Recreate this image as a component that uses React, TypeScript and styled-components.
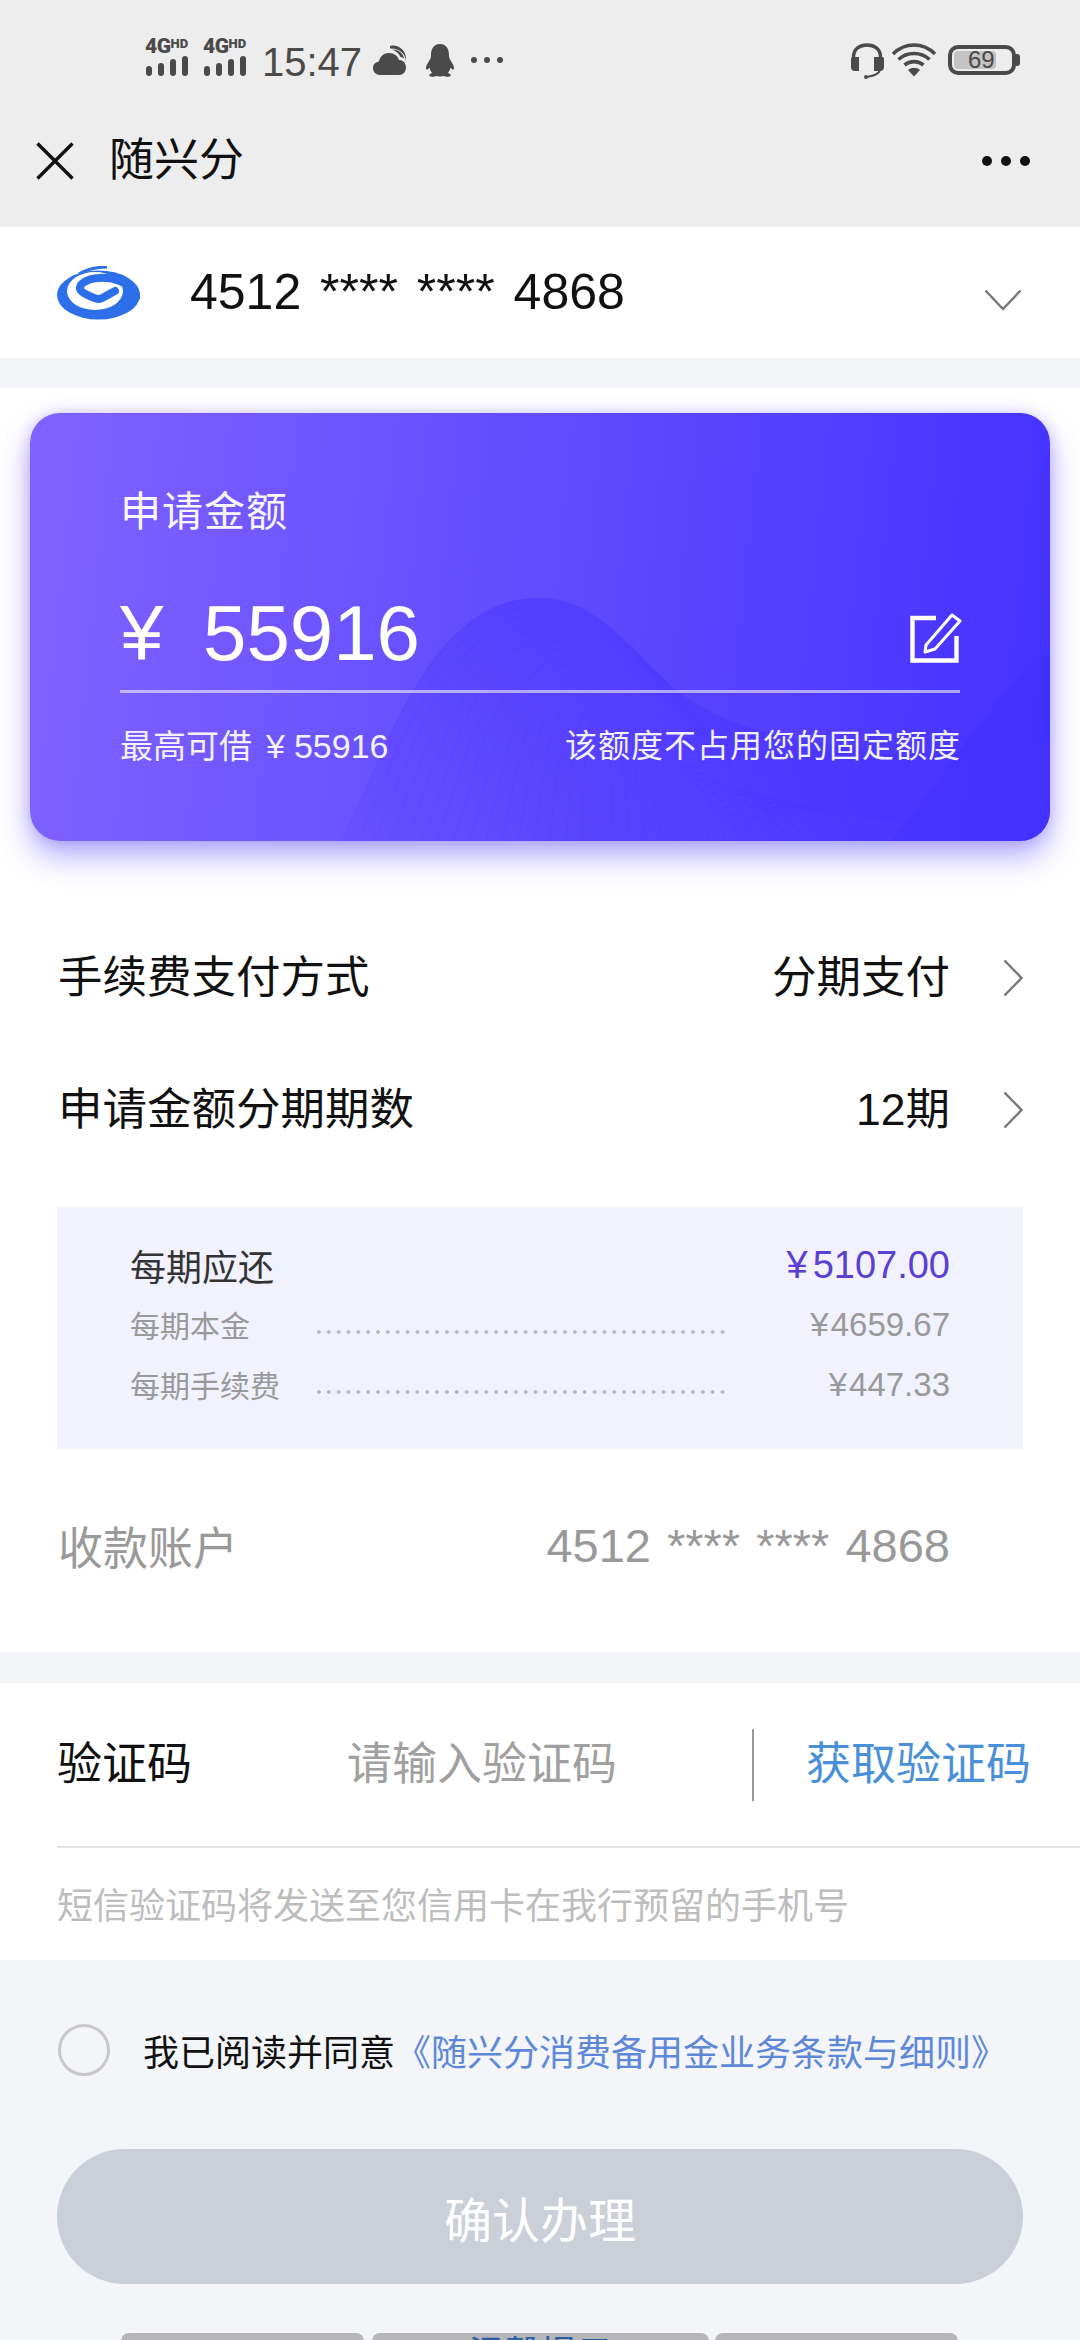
import React from "react";
import styled, { createGlobalStyle } from "styled-components";

const Global = createGlobalStyle`
  html, body { margin: 0; padding: 0; background: #f3f5f9; }
  body { font-family: "Liberation Sans", "Noto Sans CJK SC", sans-serif; color: #111; }
  * { box-sizing: border-box; }
`;

const Page = styled.div`
  width: 1080px;
  height: 2340px;
  overflow: hidden;
  background: #f3f5f9;
`;

const TopBar = styled.header`
  height: 227px;
  background: #ededed;
`;

const StatusBar = styled.div`
  height: 118px;
  padding: 25px 60px 0 145px;
  display: flex;
  align-items: flex-start;
  color: #4a4a4a;
`;

const SignalWrap = styled.div`
  width: 46px;
  margin-right: 12px;
  margin-top: 13px;
  display: flex;
  flex-direction: column;
`;

const NetLabel = styled.div`
  height: 17px;
  display: flex;
  align-items: flex-start;
  font-family: "Roboto", sans-serif;
  font-weight: 900;
  font-size: 21px;
  line-height: 17px;
  letter-spacing: -0.5px;
  white-space: nowrap;
`;

const NetHd = styled.span`
  font-size: 13px;
  line-height: 12px;
  letter-spacing: 0;
`;

const Clock = styled.div`
  font-size: 40px;
  line-height: 40px;
  margin: 17px 11px 0 1px;
`;

const IconSlot = styled.div<{ $w: number; $top: number; $mr: number }>`
  width: ${(p) => p.$w}px;
  margin-top: ${(p) => p.$top}px;
  margin-right: ${(p) => p.$mr}px;
  display: flex;
  flex: none;
`;

const StatusSpacer = styled.div`
  flex: 1;
`;

const Battery = styled.div`
  width: 68px;
  height: 30px;
  margin-top: 20px;
  border: 4px solid #4a4a4a;
  border-radius: 10px;
  padding: 2px;
  display: flex;
  align-items: stretch;
  font-family: "Liberation Sans", sans-serif;
  overflow: hidden;
`;

const BatteryFill = styled.div`
  width: 42px;
  flex: none;
  background: #c3c3c3;
  border-radius: 4px;
  font-size: 24px;
  line-height: 18px;
  padding-left: 14px;
  white-space: nowrap;
  color: #4a4a4a;
`;

const BatteryTip = styled.div`
  width: 4px;
  height: 12px;
  margin-top: 29px;
  background: #4a4a4a;
  border-radius: 0 3px 3px 0;
`;

const NavBar = styled.div`
  height: 109px;
  padding: 0 50px 24px 36px;
  display: flex;
  align-items: center;
`;

const NavTitle = styled.div`
  margin-left: 35px;
  font-size: 45px;
  line-height: 50px;
  flex: 1;
  color: #111;
`;

const NavDots = styled.div`
  display: flex;
  gap: 9px;
`;

const NavDot = styled.span`
  width: 10px;
  height: 10px;
  border-radius: 50%;
  background: #111;
`;

const AccountRow = styled.div`
  height: 131px;
  background: #fff;
  padding: 0 58px 0 57px;
  display: flex;
  align-items: center;
`;

const AccountNumber = styled.div`
  margin-left: 50px;
  font-size: 50px;
  line-height: 56px;
  flex: 1;
  margin-top: -2px;
  word-spacing: 5px;
  white-space: nowrap;
`;

const AccountChevron = styled.div`
  display: flex;
  margin-top: 14px;
`;

const Main = styled.main`
  margin-top: 30px;
  height: 1264px;
  background: #fff;
  padding-top: 25px;
`;

const CardShadow = styled.div`
  margin: 0 30px;
  border-radius: 30px;
  box-shadow: 0 16px 30px rgba(80, 60, 255, 0.42), 0 0 14px rgba(80, 60, 255, 0.22);
`;

const Card = styled.section`
  position: relative;
  height: 428px;
  border-radius: 30px;
  overflow: hidden;
  background: linear-gradient(96deg, #7f63ff 0%, #6a52ff 35%, #5640ff 70%, #4331ff 100%);
`;

const CardWave = styled.svg`
  position: absolute;
  left: 0;
  top: 0;
  width: 100%;
  height: 100%;
`;

const CardBody = styled.div`
  position: relative;
  padding: 74px 90px 0;
  color: #fff;
`;

const CardLabel = styled.div`
  font-size: 41px;
  line-height: 50px;
  letter-spacing: 1px;
  opacity: 0.95;
`;

const AmountRow = styled.div`
  margin-top: 27px;
  height: 129px;
  padding-top: 24px;
  border-bottom: 3px solid rgba(255, 255, 255, 0.55);
  display: flex;
  align-items: flex-start;
`;

const Yen = styled.span`
  font-size: 78px;
  line-height: 90px;
  width: 83px;
  font-family: "Liberation Sans", sans-serif;
`;

const Amount = styled.span`
  font-size: 78px;
  line-height: 90px;
  flex: 1;
`;

const EditSlot = styled.div`
  width: 52px;
  margin-top: 23px;
  margin-right: -2px;
  display: flex;
`;

const CardFoot = styled.div`
  margin-top: 31px;
  display: flex;
  justify-content: space-between;
  font-size: 32px;
  line-height: 44px;
  opacity: 0.92;
`;

const FootLeft = styled.span`
  font-size: 33px;
`;

const FootAmount = styled.span`
  margin-left: 14px;
  font-size: 34px;
`;

const SmallYen = styled.span<{ $gap: number }>`
  margin-right: ${(p) => p.$gap}px;
`;

const RightNote = styled.span`
  letter-spacing: 1px;
  margin-right: -1px;
`;

const OptionList = styled.div`
  margin-top: 71px;
`;

const OptionRow = styled.div`
  height: 132px;
  padding: 0 57px 0 58px;
  display: flex;
  align-items: center;
  font-size: 44.5px;
  line-height: 50px;
  color: #111;
`;

const OptionLabel = styled.span`
  flex: 1;
`;

const OptionValue = styled.span`
  margin-right: 53px;
`;

const Repay = styled.section`
  margin: 31px 57px 0;
  height: 242px;
  background: #f1f2fd;
  padding: 33px 73px 0;
`;

const RepayHead = styled.div`
  height: 50px;
  margin-bottom: 4px;
  display: flex;
  justify-content: space-between;
  align-items: center;
  font-size: 36px;
  color: #333;
`;

const RepayTotal = styled.span`
  font-size: 38px;
  color: #5a3fd4;
`;

const RepayLine = styled.div`
  height: 60px;
  display: flex;
  align-items: center;
  font-size: 30px;
  color: #999;
`;

const RepayName = styled.span`
  width: 184px;
  flex: none;
`;

const Dots = styled.span`
  width: 413px;
  height: 4px;
  margin-top: 16px;
  flex: none;
  background-image: radial-gradient(circle, #b9bac4 1.6px, transparent 1.8px);
  background-size: 9.85px 4px;
  background-repeat: repeat-x;
`;

const RepayValue = styled.span`
  flex: 1;
  text-align: right;
  font-size: 33px;
  margin-top: 2px;
`;

const PayeeRow = styled.div`
  margin: 46px 130px 0 58px;
  height: 100px;
  display: flex;
  justify-content: space-between;
  align-items: center;
  color: #999;
  font-size: 45px;
`;

const PayeeNumber = styled.span`
  font-size: 47px;
  word-spacing: 3px;
  white-space: nowrap;
`;

const Form = styled.section`
  margin-top: 31px;
  height: 277px;
  background: #fff;
  padding-left: 57px;
`;

const CodeRow = styled.div`
  height: 165px;
  padding-right: 49px;
  border-bottom: 2px solid #e2e2e4;
  display: flex;
  align-items: center;
  font-size: 45px;
  line-height: 50px;
`;

const CodeLabel = styled.span`
  width: 290px;
  flex: none;
  color: #111;
`;

const CodeInput = styled.span`
  flex: 1;
  color: #a0a0a0;
`;

const CodeDivider = styled.span`
  width: 2px;
  height: 72px;
  background: #999;
  margin-right: 52px;
`;

const CodeAction = styled.span`
  color: #4a90d9;
`;

const Hint = styled.div`
  height: 110px;
  display: flex;
  align-items: center;
  font-size: 36px;
  color: #bdbdbd;
`;

const Agreement = styled.div`
  margin-top: 40px;
  height: 100px;
  padding-left: 58px;
  display: flex;
  align-items: center;
  font-size: 36px;
  color: #111;
  white-space: nowrap;
`;

const CheckCircle = styled.span`
  width: 52px;
  height: 52px;
  border-radius: 50%;
  border: 3px solid #c8c8c8;
  margin-right: 33px;
  flex: none;
`;

const AgreementLink = styled.span`
  color: #5f87d8;
`;

const SubmitButton = styled.button`
  display: block;
  margin: 49px 57px 0;
  width: 966px;
  height: 135px;
  border: 0;
  border-radius: 68px;
  background: #cbcfd7;
  color: #fff;
  font: inherit;
  font-size: 48px;
  letter-spacing: 0;
`;

const Footer = styled.footer`
  margin-top: 49px;
  padding-left: 121px;
  height: 7px;
  display: flex;
  overflow: hidden;
`;

const FooterTab = styled.div<{ $w: number; $mr: number }>`
  width: ${(p) => p.$w}px;
  margin-right: ${(p) => p.$mr}px;
  height: 50px;
  flex: none;
  background: #b6b6b9;
  border-radius: 8px 8px 0 0;
  text-align: center;
  font-size: 36px;
  line-height: 44px;
  color: #2a5ca6;
`;

const wave = Array.from({ length: 34 }, (_, i) => i);

function Signal() {
  return (
    <SignalWrap>
      <NetLabel>
        4G<NetHd>HD</NetHd>
      </NetLabel>
      <svg width="44" height="21" viewBox="0 0 44 21">
        <rect x="1" y="11" width="6" height="10" rx="3" fill="#4a4a4a" />
        <rect x="13" y="8" width="6" height="13" rx="3" fill="#4a4a4a" />
        <rect x="25" y="4" width="6" height="17" rx="3" fill="#4a4a4a" />
        <rect x="37" y="1" width="6" height="20" rx="3" fill="#4a4a4a" />
      </svg>
    </SignalWrap>
  );
}

function Chevron() {
  return (
    <svg width="20" height="38" viewBox="0 0 20 38" fill="none">
      <path d="M1.5 1.5 L18.5 19 L1.5 36.5" stroke="#777" strokeWidth="2.4" />
    </svg>
  );
}

export default function App() {
  return (
    <Page>
      <Global />
      <TopBar>
        <StatusBar>
          <Signal />
          <Signal />
          <Clock>15:47</Clock>
          <IconSlot $w={33} $top={20} $mr={19}>
            <svg width="33" height="30" viewBox="0 0 33 30" fill="#4a4a4a">
              <path d="M7 30 C3 30 0 27 0 23 C0 19 3 17 6 16.5 C7 11 11 8 16 8 C21 8 25 11 26 15 C30 15 33 18 33 22.5 C33 27 30 30 26 30 Z" />
              <path d="M17 1 C25 -1 33 5 33 14 L33 16 C32 8 26 3 17 3.5 Z M19 4.5 C25 4 30 8 31.5 14 C30 12.5 28.5 12 27.5 12 C26 8.5 23 6 19 4.5 Z" />
            </svg>
          </IconSlot>
          <IconSlot $w={30} $top={19} $mr={15}>
            <svg width="30" height="33" viewBox="0 0 30 33" fill="#4a4a4a">
              <path d="M15 0 C22 0 24 6 24 11 C24 14 25 15 26 17 C28 20 30 24 28.5 25.5 C27.5 26 26 24.5 25.5 23.5 C25 26 24 27.5 23 29 C25 29.5 26 30.5 25.5 32 C25 33 20 33 19 32 C17 32.5 13 32.5 11 32 C10 33 5 33 4.5 32 C4 30.5 5 29.5 7 29 C6 27.5 5 26 4.5 23.5 C4 24.5 2.5 26 1.5 25.5 C0 24 2 20 4 17 C5 15 6 14 6 11 C6 6 8 0 15 0 Z" />
            </svg>
          </IconSlot>
          <IconSlot $w={34} $top={31} $mr={0}>
            <svg width="34" height="8" viewBox="0 0 34 8" fill="#4a4a4a">
              <circle cx="4" cy="4" r="3" />
              <circle cx="17" cy="4" r="3" />
              <circle cx="30" cy="4" r="3" />
            </svg>
          </IconSlot>
          <StatusSpacer />
          <IconSlot $w={35} $top={18} $mr={6}>
            <svg width="35" height="36" viewBox="0 0 35 36" fill="none">
              <path d="M3.5 20 V14 C3.5 6 9.5 2 17 2 C24.5 2 30.5 6 30.5 14 V20" stroke="#4a4a4a" strokeWidth="3.5" />
              <path d="M1 16 C1 14.5 2 14 3 14 H9 V28 H5 C2.5 28 1 26.5 1 24 Z M34 16 C34 14.5 33 14 32 14 H24 V28 H30 C32.5 28 34 26.5 34 24 Z" fill="#4a4a4a" />
              <path d="M30 27 C29 31 25 32.5 17 34" stroke="#4a4a4a" strokeWidth="2" />
              <circle cx="16" cy="34" r="2" fill="#4a4a4a" />
            </svg>
          </IconSlot>
          <IconSlot $w={46} $top={18} $mr={11}>
            <svg width="46" height="34" viewBox="0 0 46 34" fill="none">
              <path d="M2 11 C14 -1 32 -1 44 11" stroke="#4a4a4a" strokeWidth="3.6" />
              <path d="M7.5 16.5 C16 8.5 30 8.5 38.5 16.5" stroke="#4a4a4a" strokeWidth="3.6" />
              <path d="M13.5 22 C19 17.5 27 17.5 32.5 22" stroke="#4a4a4a" strokeWidth="3.6" />
              <path d="M17 27 C20.5 24 25.5 24 29 27 L23 33.5 Z" fill="#4a4a4a" />
            </svg>
          </IconSlot>
          <Battery>
            <BatteryFill>69</BatteryFill>
          </Battery>
          <BatteryTip />
        </StatusBar>
        <NavBar>
          <svg width="38" height="38" viewBox="0 0 38 38" fill="none">
            <path d="M1.5 1.5 L36.5 36.5 M36.5 1.5 L1.5 36.5" stroke="#111" strokeWidth="3.4" />
          </svg>
          <NavTitle>随兴分</NavTitle>
          <NavDots>
            <NavDot />
            <NavDot />
            <NavDot />
          </NavDots>
        </NavBar>
      </TopBar>

      <AccountRow>
        <svg width="83" height="54" viewBox="0 0 83 54" fill="none">
          <ellipse cx="41.5" cy="29" rx="41.5" ry="24.5" fill="#2c6fe9" />
          <path d="M22 8 C30 3 40 1 50 1" stroke="#2c6fe9" strokeWidth="3" />
          <ellipse cx="38" cy="25" rx="28" ry="19" fill="#fff" />
          <path d="M80 30 C72 15 55 11 42 12 C30 12.5 22 18 23 23 C24 27 38 33 42 33 C45 33 52 28 58 25" stroke="#2c6fe9" strokeWidth="8" strokeLinecap="round" strokeLinejoin="round" />
        </svg>
        <AccountNumber>4512 **** **** 4868</AccountNumber>
        <AccountChevron>
          <svg width="38" height="22" viewBox="0 0 38 22" fill="none">
            <path d="M1.5 1.5 L19 20 L36.5 1.5" stroke="#777" strokeWidth="2.4" />
          </svg>
        </AccountChevron>
      </AccountRow>

      <Main>
        <CardShadow>
          <Card>
            <CardWave viewBox="0 0 1020 428" preserveAspectRatio="none">
              <defs>
                <linearGradient id="waveFill" x1="0" y1="1" x2="1" y2="0">
                  <stop offset="0" stopColor="#4a35ff" stopOpacity="0.04" />
                  <stop offset="0.6" stopColor="#4a35ff" stopOpacity="0.5" />
                  <stop offset="1" stopColor="#4030ff" stopOpacity="0.55" />
                </linearGradient>
              </defs>
              <path d="M312 428 C360 330 400 190 504 185 C570 183 600 240 650 280 C710 325 790 330 880 345 C940 355 990 340 1020 330 L1020 428 Z" fill="url(#waveFill)" />
              <path d="M862 428 C900 380 960 290 1020 230 L1020 428 Z" fill="#3f2fff" fillOpacity="0.4" />
              {wave.map((i) => (
                <path
                  key={i}
                  d={`M${312 + i * 16} 428 C${360 + i * 13} ${330 + i * 1.5} ${400 + i * 10} ${190 + i * 6} ${504 + i * 6} ${185 + i * 7} C${570 + i * 5} ${183 + i * 7} ${600 + i * 4} ${240 + i * 5} ${650 + i * 3} ${280 + i * 4} C${710 + i * 2} ${325 + i * 2} ${790} ${330 + i * 2} ${880} ${345 + i * 2}`}
                  fill="none"
                  stroke="#3e2cff"
                  strokeOpacity="0.07"
                  strokeWidth="1.5"
                />
              ))}
            </CardWave>
            <CardBody>
              <CardLabel>申请金额</CardLabel>
              <AmountRow>
                <Yen>¥</Yen>
                <Amount>55916</Amount>
                <EditSlot>
                  <svg width="52" height="52" viewBox="0 0 52 52" fill="none">
                    <path d="M26 7 H2.5 V49.5 H46.5 V25" stroke="#fff" strokeWidth="4.4" />
                    <path d="M16 34 L42 4 L50 10 L25 38 L15 41 Z" stroke="#fff" strokeWidth="3" strokeLinejoin="round" />
                  </svg>
                </EditSlot>
              </AmountRow>
              <CardFoot>
                <FootLeft>
                  最高可借
                  <FootAmount>
                    <SmallYen $gap={9}>¥</SmallYen>55916
                  </FootAmount>
                </FootLeft>
                <RightNote>该额度不占用您的固定额度</RightNote>
              </CardFoot>
            </CardBody>
          </Card>
        </CardShadow>

        <OptionList>
          <OptionRow>
            <OptionLabel>手续费支付方式</OptionLabel>
            <OptionValue>分期支付</OptionValue>
            <Chevron />
          </OptionRow>
          <OptionRow>
            <OptionLabel>申请金额分期期数</OptionLabel>
            <OptionValue>12期</OptionValue>
            <Chevron />
          </OptionRow>
        </OptionList>

        <Repay>
          <RepayHead>
            <span>每期应还</span>
            <RepayTotal>
              <SmallYen $gap={5}>¥</SmallYen>5107.00
            </RepayTotal>
          </RepayHead>
          <RepayLine>
            <RepayName>每期本金</RepayName>
            <Dots />
            <RepayValue>
              <SmallYen $gap={2}>¥</SmallYen>4659.67
            </RepayValue>
          </RepayLine>
          <RepayLine>
            <RepayName>每期手续费</RepayName>
            <Dots />
            <RepayValue>
              <SmallYen $gap={2}>¥</SmallYen>447.33
            </RepayValue>
          </RepayLine>
        </Repay>

        <PayeeRow>
          <span>收款账户</span>
          <PayeeNumber>4512 **** **** 4868</PayeeNumber>
        </PayeeRow>
      </Main>

      <Form>
        <CodeRow>
          <CodeLabel>验证码</CodeLabel>
          <CodeInput>请输入验证码</CodeInput>
          <CodeDivider />
          <CodeAction>获取验证码</CodeAction>
        </CodeRow>
        <Hint>短信验证码将发送至您信用卡在我行预留的手机号</Hint>
      </Form>

      <Agreement>
        <CheckCircle />
        我已阅读并同意
        <AgreementLink>《随兴分消费备用金业务条款与细则》</AgreementLink>
      </Agreement>

      <SubmitButton>确认办理</SubmitButton>

      <Footer>
        <FooterTab $w={243} $mr={8} />
        <FooterTab $w={337} $mr={6}>温馨提示</FooterTab>
        <FooterTab $w={243} $mr={0} />
      </Footer>
    </Page>
  );
}
